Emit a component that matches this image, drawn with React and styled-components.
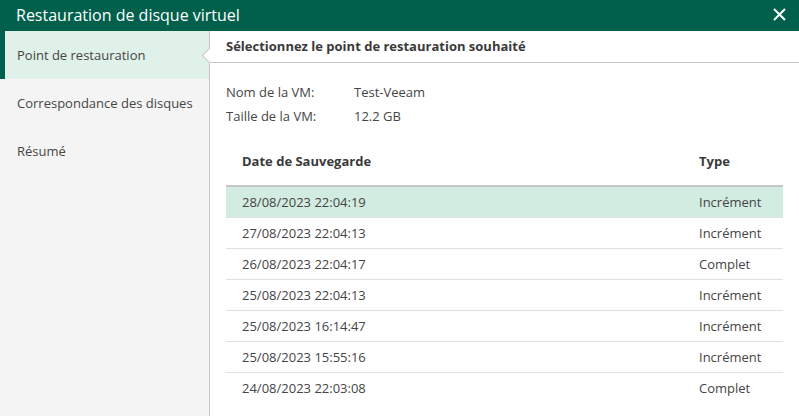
import React from 'react';
import styled, { createGlobalStyle } from 'styled-components';

const GlobalStyle = createGlobalStyle`
  html, body {
    margin: 0;
    padding: 0;
    background: #ffffff;
  }
  body {
    font-family: 'Open Sans', 'Liberation Sans', sans-serif;
    font-size: 13px;
    color: #3c3c3c;
  }
`;

const steps = ['Point de restauration', 'Correspondance des disques', 'Résumé'];

const points = [
  { date: '28/08/2023 22:04:19', type: 'Incrément' },
  { date: '27/08/2023 22:04:13', type: 'Incrément' },
  { date: '26/08/2023 22:04:17', type: 'Complet' },
  { date: '25/08/2023 22:04:13', type: 'Incrément' },
  { date: '25/08/2023 16:14:47', type: 'Incrément' },
  { date: '25/08/2023 15:55:16', type: 'Incrément' },
  { date: '24/08/2023 22:03:08', type: 'Complet' },
];

const App = () => {
  return (
    <>
      <GlobalStyle />
      <Dialog>
        <TitleBar>
          <Title>Restauration de disque virtuel</Title>
          <CloseButton aria-label="Fermer">
            <svg width="13" height="13" viewBox="0 0 13 13">
              <path d="M1 1 L12 12 M12 1 L1 12" stroke="#ffffff" strokeWidth="2" />
            </svg>
          </CloseButton>
        </TitleBar>
        <Body>
          <Sidebar>
            {steps.map((step, i) => (
              <Step key={step} active={i === 0}>{step}</Step>
            ))}
          </Sidebar>
          <Content>
            <SectionHeader>Sélectionnez le point de restauration souhaité</SectionHeader>
            <Info>
              <InfoLabel>Nom de la VM:</InfoLabel>
              <InfoValue>Test-Veeam</InfoValue>
              <InfoLabel>Taille de la VM:</InfoLabel>
              <InfoValue>12.2 GB</InfoValue>
            </Info>
            <Table>
              <thead>
                <tr>
                  <HeadCell>Date de Sauvegarde</HeadCell>
                  <HeadCell narrow>Type</HeadCell>
                </tr>
              </thead>
              <tbody>
                {points.map((p, i) => (
                  <Row key={p.date} selected={i === 0}>
                    <Cell>{p.date}</Cell>
                    <Cell narrow>{p.type}</Cell>
                  </Row>
                ))}
              </tbody>
            </Table>
          </Content>
        </Body>
      </Dialog>
    </>
  );
};

export default App;

const Dialog = styled.div`
  display: flex;
  flex-direction: column;
  width: 799px;
  height: 416px;
  overflow: hidden;
`;

const TitleBar = styled.div`
  display: flex;
  align-items: center;
  justify-content: space-between;
  height: 31px;
  padding: 0 13px 0 16px;
  background: #00604b;
  flex-shrink: 0;
`;

const Title = styled.div`
  color: #ffffff;
  font-size: 16px;
  line-height: 31px;
`;

const CloseButton = styled.div`
  display: flex;
  align-items: center;
  width: 13px;
  height: 13px;
  margin-top: -2px;
`;

const Body = styled.div`
  display: flex;
  flex: 1;
`;

const Sidebar = styled.div`
  width: 209px;
  flex-shrink: 0;
  background: #f4f4f4;
  border-right: 1px solid #c6c6c6;
`;

const Step = styled.div`
  position: relative;
  height: 48px;
  display: flex;
  align-items: center;
  padding-left: ${(props) => (props.active ? '12px' : '17px')};
  border-left: ${(props) => (props.active ? '5px solid #00604b' : 'none')};
  background: ${(props) => (props.active ? '#dff1e8' : 'transparent')};
  color: #454545;
  font-size: 13px;

  &::after {
    content: '';
    display: ${(props) => (props.active ? 'block' : 'none')};
    position: absolute;
    right: -6px;
    top: 19px;
    width: 10px;
    height: 10px;
    background: #ffffff;
    border-left: 1px solid #c6c6c6;
    border-bottom: 1px solid #c6c6c6;
    transform: rotate(45deg);
  }
`;

const Content = styled.div`
  flex: 1;
  display: flex;
  flex-direction: column;
`;

const SectionHeader = styled.div`
  height: 31px;
  line-height: 31px;
  padding-left: 16px;
  border-bottom: 1px solid #c6c6c6;
  font-weight: 700;
  color: #3a3a3a;
`;

const Info = styled.div`
  display: grid;
  grid-template-columns: 128px auto;
  grid-auto-rows: 24px;
  align-items: center;
  padding: 17px 0 0 16px;
  color: #454545;
`;

const InfoLabel = styled.div``;

const InfoValue = styled.div``;

const Table = styled.table`
  width: 557px;
  margin: 9px 0 0 16px;
  border-collapse: collapse;
  color: #454545;
`;

const HeadCell = styled.th`
  height: 48px;
  padding: 0 0 0 16px;
  text-align: left;
  font-weight: 700;
  color: #3a3a3a;
  border-bottom: 2px solid #c6c6c6;
  width: ${(props) => (props.narrow ? '84px' : 'auto')};
`;

const Row = styled.tr`
  height: 31px;
  background: ${(props) => (props.selected ? '#d2ece1' : 'transparent')};
  border-bottom: 1px solid #e0e0e0;

  &:last-child {
    border-bottom: none;
  }
`;

const Cell = styled.td`
  padding: 0 0 0 16px;
  width: ${(props) => (props.narrow ? '84px' : 'auto')};
`;
